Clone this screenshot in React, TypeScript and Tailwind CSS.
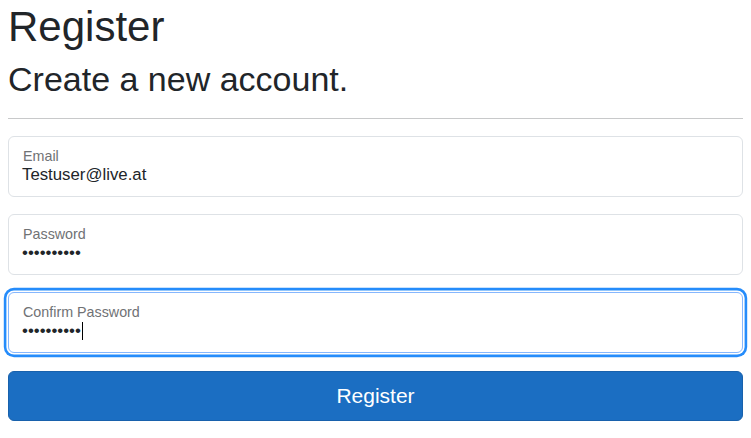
import React from "react";

type FieldProps = {
  label: string;
  value: string;
  focused?: boolean;
};

function FloatingField({ label, value, focused }: FieldProps) {
  return (
    <div
      className={
        "h-[61px] rounded-[6px] border bg-white px-[13px] " +
        (focused
          ? "border-[#86b7fe] shadow-[0_0_0_1.6px_#ffffff,0_0_0_4.2px_#258cfb]"
          : "border-[#dee2e6]")
      }
    >
      <div className="ml-[1px] pt-[11px] text-[14.3px] leading-[16px] text-[#707275]">{label}</div>
      <div className="mt-[2px] flex items-center text-[16.8px] leading-[18px] text-[#212529]">
        <span>{value}</span>
        {focused && <span className="ml-[1px] inline-block h-[18px] w-px bg-black" />}
      </div>
    </div>
  );
}

export default function App() {
  return (
    <div
      className="min-h-screen bg-white px-2 text-[#212529]"
      style={{ fontFamily: '"Liberation Sans", Arial, sans-serif' }}
    >
      <h1 className="mt-[2px] text-[42px] leading-[50px] font-normal">Register</h1>
      <h2 className="mt-[7px] text-[34px] leading-[41px] font-normal">Create a new account.</h2>
      <hr className="mt-[18px] mb-[17px] border-0 border-t border-[#c8c9ca]" />

      <form className="flex flex-col gap-[17px]" onSubmit={(e) => e.preventDefault()}>
        <FloatingField label="Email" value="Testuser@live.at" />
        <FloatingField label="Password" value="••••••••••" />
        <FloatingField label="Confirm Password" value="••••••••••" focused />
        <button
          type="submit"
          className="mt-px h-[50px] w-full rounded-[6px] border border-[#1861ac] bg-[#1b6ec2] text-[21px] text-white"
        >
          Register
        </button>
      </form>
    </div>
  );
}
